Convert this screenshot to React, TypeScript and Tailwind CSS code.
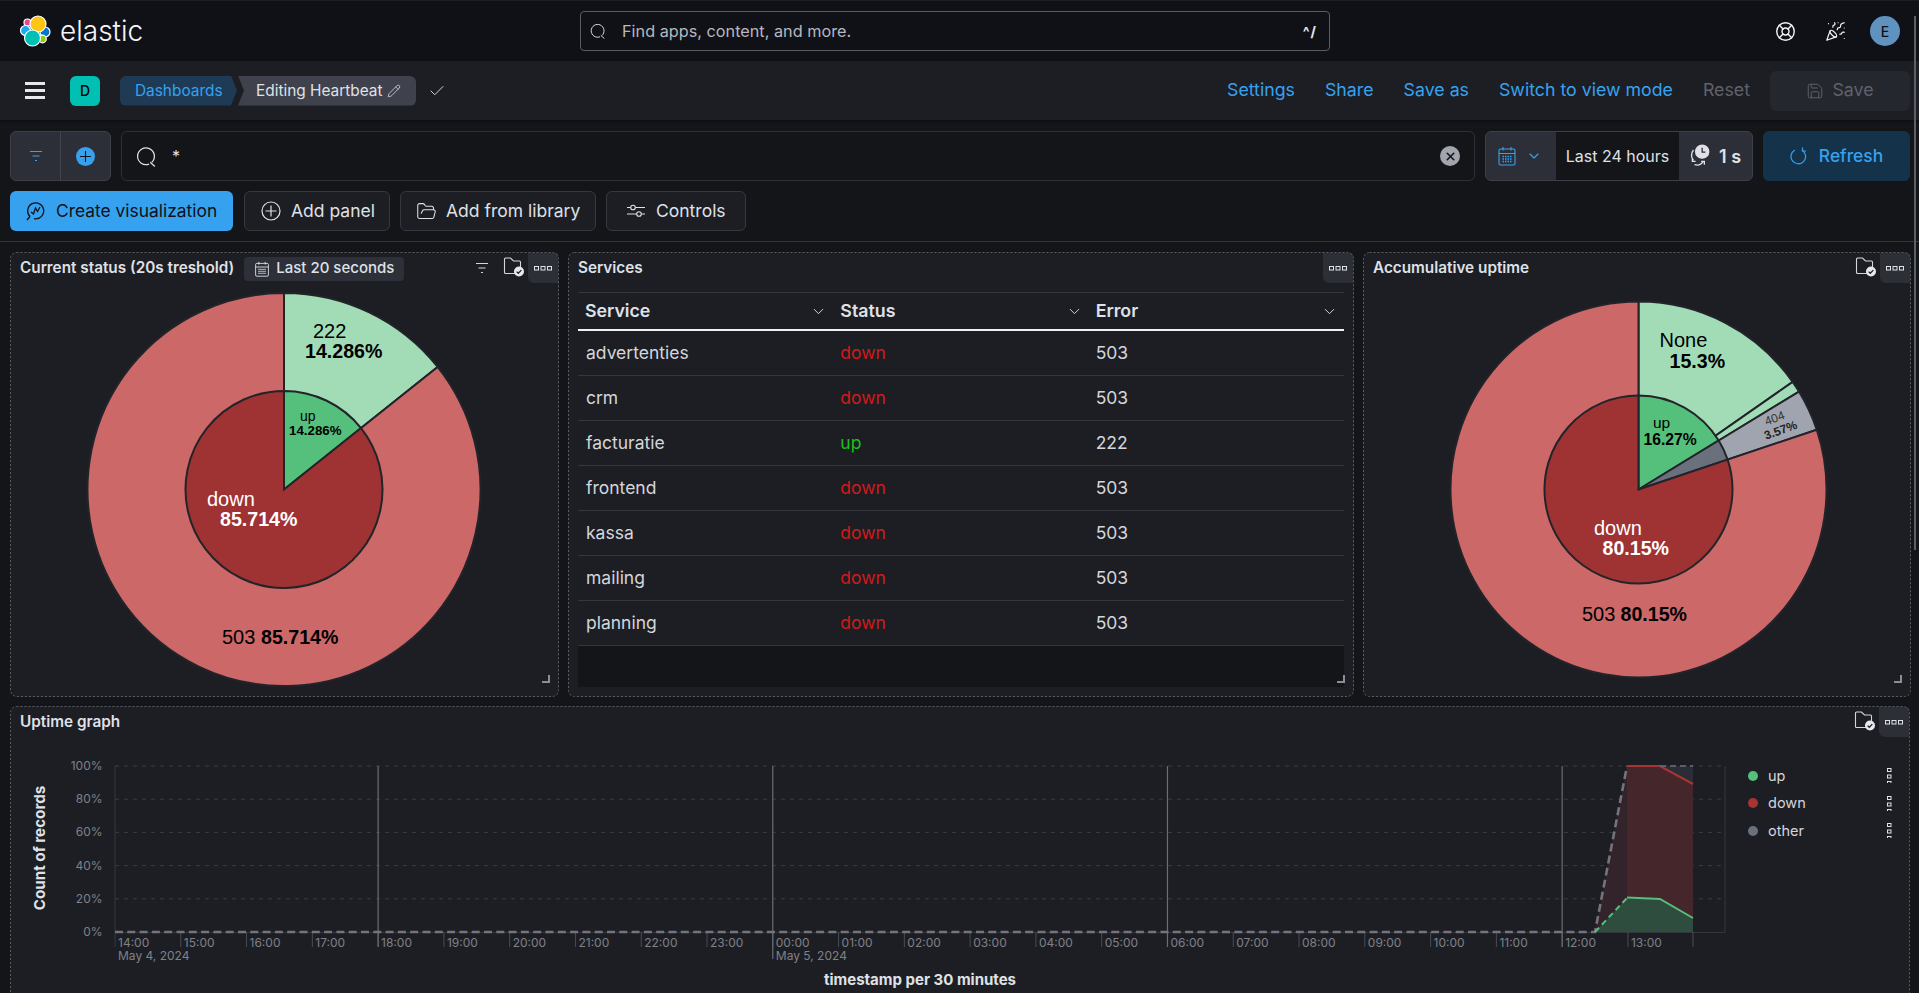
import React from "react";
import { LifeBuoy, PartyPopper, Save, Pencil, Check, FolderOpen, ChevronDown, X as CloseIcon } from "lucide-react";

const pt = (cx: number, cy: number, r: number, pct: number) => {
  const a = (pct / 100) * 2 * Math.PI;
  return [cx + r * Math.sin(a), cy - r * Math.cos(a)];
};
const slice = (cx: number, cy: number, r: number, from: number, to: number) => {
  const [x1, y1] = pt(cx, cy, r, from);
  const [x2, y2] = pt(cx, cy, r, to);
  const large = to - from > 50 ? 1 : 0;
  return `M${cx} ${cy}L${x1} ${y1}A${r} ${r} 0 ${large} 1 ${x2} ${y2}Z`;
};

const Dots = ({ vertical = false }: { vertical?: boolean }) => (
  <svg width={vertical ? 5 : 19} height={vertical ? 15 : 5} viewBox={vertical ? "0 0 5 15" : "0 0 19 5"} fill="none" stroke="#e0e2e8" strokeWidth="1">
    {[0, 6.5, 13].map((p) =>
      vertical ? <rect key={p} x="0.5" y={p + 0.5} width="3.5" height="3" /> : <rect key={p} x={p + 0.5} y="0.5" width="4" height="3.5" />
    )}
  </svg>
);

const FolderCheck = () => (
  <svg width="22" height="20" viewBox="0 0 22 20" fill="none">
    <path d="M14 16.5H2.5a1 1 0 0 1-1-1V2a1 1 0 0 1 1-1h5l3 3h6a1 1 0 0 1 1 1v5" stroke="#d4d6dc" strokeWidth="1.1" />
    <circle cx="16" cy="14.5" r="5" fill="#e6e8ee" />
    <path d="M13.6 14.6l1.7 1.7 3-3.2" stroke="#1d1e24" strokeWidth="1.3" />
  </svg>
);

const Filter = ({ color = "#d4d6dc" }: { color?: string }) => (
  <svg width="14" height="12" viewBox="0 0 14 12" fill="none" stroke={color} strokeWidth="1.2">
    <path d="M1 1.5h12M3.5 6h7M6 10.5h2" />
  </svg>
);

const SearchIcon = ({ size = 16 }: { size?: number }) => (
  <svg width={size} height={size} viewBox="0 0 20 20" fill="none" stroke="#e0e2e8" strokeWidth="1.2">
    <path d="M12.5 17.2A8 8 0 1 1 15 15.6" />
    <path d="M13.5 15.5L18 19.5" />
  </svg>
);

const CalendarGrid = ({ color, size = 20 }: { color: string; size?: number }) => (
  <svg width={size} height={size} viewBox="0 0 20 20" fill="none" stroke={color} strokeWidth="1.1">
    <rect x="2" y="3" width="16" height="16" rx="1.5" />
    <path d="M2 7.5h16M6 1v3.5M14 1v3.5" />
    <path d="M5.5 10.5h9M5.5 13h9M5.5 15.5h9" strokeDasharray="1.5 1" strokeWidth="1.4" />
  </svg>
);

const Panel = ({ className, title, extra, filter, folder = true, children }: { className: string; title: string; extra?: React.ReactNode; filter?: boolean; folder?: boolean; children: React.ReactNode }) => (
  <div className={`relative flex flex-col overflow-hidden rounded-md bg-[#1d1e24] p-px ${className}`}>
    <div className="flex h-[29px] shrink-0 items-start">
      <div className="flex h-[29px] flex-1 items-center pl-[9px] pt-[2px]">
        <span className="text-[15.3px] font-semibold text-[#dfe1e7]">{title}</span>
        {extra}
      </div>
      <div className="flex h-[30px] items-center">
        {filter && <div className="mr-[14px]"><Filter /></div>}
        {folder && <div className="mr-[3px] mt-[-2px]"><FolderCheck /></div>}
        <div className="flex h-[30px] w-[30px] items-center justify-center rounded-bl-md bg-[#2d2f36]"><Dots /></div>
      </div>
    </div>
    {children}
    <svg className="pointer-events-none absolute left-0 top-0 h-full w-full" fill="none">
      <rect x="0.5" y="0.5" rx="6" className="h-[calc(100%-1px)] w-[calc(100%-1px)]" stroke="#5c5e66" strokeDasharray="2 2" />
    </svg>
  </div>
);

const Resize = () => (
  <svg className="absolute bottom-[14px] right-[9px]" width="8" height="8" viewBox="0 0 8 8" fill="none" stroke="#8a8e99" strokeWidth="2"><path d="M0 7h7V0" /></svg>
);

const PieSvg = ({ vb, children }: { vb: string; children: React.ReactNode }) => (
  <svg className="min-h-0 flex-1 font-['Liberation_Sans',Arial,sans-serif]" viewBox={vb} preserveAspectRatio="xMinYMin meet">{children}</svg>
);

const STROKE = { stroke: "#23242a", strokeWidth: 2 };

const CurrentPie = () => {
  const c = [284, 489.5] as const;
  return (
    <PieSvg vb="11 282 547 414">
      <path d={slice(c[0], c[1], 196.5, 0, 14.286)} fill="#a2dcb6" {...STROKE} />
      <path d={slice(c[0], c[1], 196.5, 14.286, 100)} fill="#cd6868" {...STROKE} />
      <path d={slice(c[0], c[1], 98.5, 0, 14.286)} fill="#54c07b" {...STROKE} />
      <path d={slice(c[0], c[1], 98.5, 14.286, 100)} fill="#9f3232" {...STROKE} />
      <g fill="#000">
        <text x="313" y="338" fontSize="20">222</text>
        <text x="305" y="358" fontSize="19.6" fontWeight="700">14.286%</text>
        <text x="300" y="421" fontSize="14">up</text>
        <text x="289" y="435" fontSize="13.3" fontWeight="700">14.286%</text>
        <text x="222" y="644" fontSize="20">503</text>
        <text x="261" y="644" fontSize="19.6" fontWeight="700">85.714%</text>
      </g>
      <g fill="#fff">
        <text x="207" y="505.5" fontSize="20">down</text>
        <text x="220" y="526" fontSize="19.6" fontWeight="700">85.714%</text>
      </g>
    </PieSvg>
  );
};

const AccPie = () => {
  const cx = 1638.5, cy = 489.5, R = 188, r = 94;
  return (
    <PieSvg vb="1364 282 546 414">
      <path d={slice(cx, cy, R, 0, 15.3)} fill="#a2dcb6" {...STROKE} />
      <path d={slice(cx, cy, R, 15.3, 16.28)} fill="#a2dcb6" {...STROKE} />
      <path d={slice(cx, cy, R, 16.28, 19.85)} fill="#a0a4ae" {...STROKE} />
      <path d={slice(cx, cy, R, 19.85, 100)} fill="#cd6868" {...STROKE} />
      <path d={slice(cx, cy, r, 0, 16.27)} fill="#54c07b" {...STROKE} />
      <path d={slice(cx, cy, r, 16.27, 19.85)} fill="#6a717d" {...STROKE} />
      <path d={slice(cx, cy, r, 19.85, 100)} fill="#9f3232" {...STROKE} />
      <g fill="#000">
        <text x="1659.5" y="347" fontSize="20">None</text>
        <text x="1669.5" y="368" fontSize="19.6" fontWeight="700">15.3%</text>
        <text x="1653" y="428" fontSize="15.5">up</text>
        <text x="1643.5" y="445" fontSize="15.7" fontWeight="700">16.27%</text>
        <text x="1582" y="620.5" fontSize="20">503</text>
        <text x="1620.5" y="620.5" fontSize="19.6" fontWeight="700">80.15%</text>
        <text transform="translate(1776 422) rotate(-20)" textAnchor="middle" fontSize="12" fill="#333">404</text>
        <text transform="translate(1782 434) rotate(-20)" textAnchor="middle" fontSize="12" fontWeight="700" fill="#222">3.57%</text>
      </g>
      <g fill="#fff">
        <text x="1594" y="534.5" fontSize="20">down</text>
        <text x="1602.5" y="555" fontSize="19.6" fontWeight="700">80.15%</text>
      </g>
    </PieSvg>
  );
};

const rows = [
  ["advertenties", "down", "503"],
  ["crm", "down", "503"],
  ["facturatie", "up", "222"],
  ["frontend", "down", "503"],
  ["kassa", "down", "503"],
  ["mailing", "down", "503"],
  ["planning", "down", "503"],
];

const Services = () => (
  <div className="mx-[9px] mt-[10px] flex flex-1 flex-col">
    <div className="grid h-[39px] grid-cols-3 border-y border-t-[#353740] border-b-[#eef0f4] border-b-2 text-[17.8px] font-semibold text-[#dfe1e7]">
      {["Service", "Status", "Error"].map((h) => (
        <div key={h} className="flex items-center justify-between pl-[7px] pr-[6px]">
          <span>{h}</span>
          <ChevronDown size={17} strokeWidth={1.3} />
        </div>
      ))}
    </div>
    {rows.map(([s, st, e]) => (
      <div key={s} className="grid h-[45px] grid-cols-3 items-center border-b border-[#34363e] text-[17.5px] text-[#d4d6dc]">
        <span className="pl-[8px]">{s}</span>
        <span className={`pl-[7px] ${st === "up" ? "text-[#19c219]" : "text-[#d11a1a]"}`}>{st}</span>
        <span className="pl-[7px]">{e}</span>
      </div>
    ))}
    <div className="mb-[9px] flex-1 bg-[#141519]" />
  </div>
);

const hours = ["14:00","15:00","16:00","17:00","18:00","19:00","20:00","21:00","22:00","23:00","00:00","01:00","02:00","03:00","04:00","05:00","06:00","07:00","08:00","09:00","10:00","11:00","12:00","13:00"];
const hx = (k: number) => 115 + 65.78 * k;

const Chart = () => (
  <svg className="h-[260px] w-[1735px] shrink-0" viewBox="11 736 1735 260">
    {[766, 799.2, 832.4, 865.6, 898.8].map((y) => (
      <path key={y} d={`M115 ${y}H1722`} stroke="#3a3c43" strokeDasharray="4 5" fill="none" />
    ))}
    <path d="M115 766V947M1725 766V932M115 932.5H1725" stroke="#34363d" fill="none" />
    {hours.map((_, i) => i > 0 && (
      <path key={i} d={`M${hx(i)} 932V947`} stroke="#4a4c53" fill="none" />
    ))}
    <path d="M1693 932V947" stroke="#4a4c53" fill="none" />
    {[4, 10, 16, 22].map((k) => (
      <path key={k} d={`M${hx(k)} 766V${k === 10 ? 959 : 947}`} stroke="#6b6d74" strokeWidth="1.2" fill="none" />
    ))}
    <path d="M1595 932L1627 766V898Z" fill="#33232a" />
    <path d="M1627 766H1660L1693 784V918L1660 899.5L1627 898Z" fill="#45272b" />
    <path d="M1660 766H1693V784Z" fill="#2a2d37" />
    <path d="M1595 932L1627 898L1660 899.5L1693 918V932Z" fill="#2f4d3f" />
    <path d="M115 932H1595L1627 766" stroke="#75747c" strokeWidth="2.6" strokeDasharray="8 4.3" fill="none" />
    <path d="M1595 932L1627 898" stroke="#54c07b" strokeWidth="2" strokeDasharray="6 4" fill="none" />
    <path d="M1627 897.5L1660 899L1693 918" stroke="#54c07b" strokeWidth="2" fill="none" />
    <path d="M1627 766H1660L1693 784" stroke="#a83434" strokeWidth="2" fill="none" />
    <path d="M1660 766H1693" stroke="#6a717d" strokeWidth="1.6" strokeDasharray="6 4" fill="none" />
    <g fill="#7f8189" fontSize="12">
      {["100%", "80%", "60%", "40%", "20%", "0%"].map((t, i) => (
        <text key={t} x="102.5" y={770 + 33.2 * i} textAnchor="end">{t}</text>
      ))}
      {hours.map((h, i) => (
        <text key={h} x={hx(i) + 3} y="947">{h}</text>
      ))}
      <text x="118" y="960">May 4, 2024</text>
      <text x={hx(10) + 3} y="960">May 5, 2024</text>
    </g>
    <text transform="translate(45 848) rotate(-90)" textAnchor="middle" fontSize="15.2" fontWeight="700" fill="#dfe1e7">Count of records</text>
    <text x="920" y="985" textAnchor="middle" fontSize="15" fontWeight="700" fill="#dfe1e7">timestamp per 30 minutes</text>
  </svg>
);

const Legend = () => (
  <div className="flex flex-1 flex-col pl-[2px] pr-[17px] pt-[26px]">
    {[["up", "bg-[#54c07b]"], ["down", "bg-[#a83434]"], ["other", "bg-[#6a717d]"]].map(([t, c]) => (
      <div key={t} className="flex h-[27.5px] items-center text-[14.5px] text-[#d4d6dc]">
        <span className={`mr-[10px] h-[10px] w-[10px] rounded-full ${c}`} />
        <span className="flex-1">{t}</span>
        <Dots vertical />
      </div>
    ))}
  </div>
);

const Logo = () => (
  <svg width="32" height="32" viewBox="19 15 32 32">
    <g stroke="#fff" strokeWidth="1.2">
      <circle cx="27.5" cy="22.5" r="3.5" fill="#e8488b" />
      <circle cx="25.5" cy="30.5" r="5" fill="#1ba9f5" />
      <circle cx="45" cy="32" r="5" fill="#0077cc" />
      <circle cx="42.5" cy="39" r="3.8" fill="#93c90e" />
      <circle cx="38" cy="24" r="8" fill="#fec514" />
      <circle cx="32.5" cy="38" r="8" fill="#00bfb3" />
    </g>
  </svg>
);

const OutlineBtn = ({ className, icon, label }: { className: string; icon: React.ReactNode; label: string }) => (
  <div className={`flex h-[40px] items-center rounded-md border border-[#363840] bg-[#1d1e24] text-[17.5px] text-[#dfe1e7] ${className}`}>
    {icon}
    <span>{label}</span>
  </div>
);

export default function App() {
  return (
    <div className="relative h-[993px] w-[1919px] overflow-hidden bg-[#141519] font-['Inter',sans-serif] text-[#dfe1e7]">
      <header className="flex h-[61px] items-center border-t border-[#1c1d22] bg-[#101116]">
        <div className="flex w-[580px] items-center pl-[19px]">
          <Logo />
          <span className="ml-[9px] text-[28px] font-light leading-none text-[#f4f5f8]">elastic</span>
        </div>
        <div className="flex h-[40px] w-[750px] items-center rounded-[4px] border border-[#5a5c64] bg-[#101116] px-[9px]">
          <SearchIcon />
          <span className="ml-[16px] flex-1 text-[16.25px] text-[#b5b8c0]">Find apps, content, and more.</span>
          <span className="pr-[3px] text-[14px] font-bold tracking-[1px] text-[#e6e8ee]">^/</span>
        </div>
        <div className="flex flex-1 items-center justify-end pr-[19px]">
          <LifeBuoy size={21} strokeWidth={1.6} className="text-[#f4f5f8]" />
          <PartyPopper size={21} strokeWidth={1.4} className="ml-[29px] text-[#f4f5f8]" />
          <div className="ml-[24px] flex h-[30px] w-[30px] items-center justify-center rounded-full bg-[#6092c0] text-[14px] font-medium text-[#101116]">E</div>
        </div>
      </header>

      <nav className="flex h-[59px] items-center bg-[#1d1e24] shadow-[0_1px_2px_#0b0c0f]">
        <div className="ml-[25px] flex w-[20px] flex-col gap-[4px]">
          <span className="h-[3px] bg-[#e6e8ee]" /><span className="h-[3px] bg-[#e6e8ee]" /><span className="h-[3px] bg-[#e6e8ee]" />
        </div>
        <div className="ml-[25px] flex h-[30px] w-[30px] items-center justify-center rounded-md bg-[#00bfb3] text-[14px] font-medium text-black">D</div>
        <div className="ml-[20px] flex h-[30px] w-[296px] items-stretch overflow-hidden rounded-md text-[15.4px]">
          <div className="flex w-[117px] items-center bg-[#1e3a55] pl-[15px] text-[#36a2ef] [clip-path:polygon(0_0,calc(100%-6px)_0,100%_50%,calc(100%-6px)_100%,0_100%)]">Dashboards</div>
          <div className="ml-[1px] flex flex-1 items-center gap-[4px] bg-[#3f424c] pl-[18px] text-[#dfe1e7] [clip-path:polygon(0_0,100%_0,100%_100%,0_100%,6px_50%)]">
            Editing Heartbeat <Pencil size={14} strokeWidth={1.3} />
          </div>
        </div>
        <Check size={18} strokeWidth={1.2} className="ml-[12px] text-[#e6e8ee]" />
        <div className="ml-auto flex items-center gap-[30px] pr-[9px] text-[17.75px]">
          <span className="text-[#36a2ef]">Settings</span>
          <span className="text-[#36a2ef]">Share</span>
          <span className="text-[#36a2ef]">Save as</span>
          <span className="text-[#36a2ef]">Switch to view mode</span>
          <span className="text-[#5f626b]">Reset</span>
          <div className="ml-[-10px] flex h-[40px] w-[140px] items-center justify-center gap-[8px] rounded-md bg-[#25272e] text-[#5f626b]">
            <Save size={18} strokeWidth={1.3} /> Save
          </div>
        </div>
      </nav>

      <div className="flex gap-[10px] pl-[10px] pr-[9px] pt-[11px]">
        <div className="flex h-[50px] w-[101px] overflow-hidden rounded-md border border-[#3e4049] bg-[#2d2f38]">
          <div className="flex w-[50px] items-center justify-center border-r border-[#43454e]"><Filter color="#36a2ef" /></div>
          <div className="flex flex-1 items-center justify-center">
            <div className="flex h-[19px] w-[19px] items-center justify-center rounded-full bg-[#36a2ef]">
              <svg width="13" height="13" viewBox="0 0 13 13" stroke="#141519" strokeWidth="1.1"><path d="M6.5 1v11M1 6.5h11" /></svg>
            </div>
          </div>
        </div>
        <div className="flex h-[50px] flex-1 items-center rounded-md border border-[#2e3037] bg-[#141519] pl-[14px] pr-[14px]">
          <SearchIcon size={21} />
          <span className="ml-[15px] flex-1 text-[16px] text-[#dfe1e7]">*</span>
          <div className="flex h-[20px] w-[20px] items-center justify-center rounded-full bg-[#a2a5ae]"><CloseIcon size={13} strokeWidth={3} className="text-[#141519]" /></div>
        </div>
        <div className="flex h-[50px] w-[268px] overflow-hidden rounded-md border border-[#3e4049] bg-[#2d2f38] text-[16px]">
          <div className="flex w-[70px] items-center gap-[6px] pl-[11px] text-[#36a2ef]">
            <CalendarGrid color="#36a2ef" />
            <ChevronDown size={16} strokeWidth={1.6} className="ml-[3px]" />
          </div>
          <div className="flex w-[123px] items-center justify-center whitespace-nowrap bg-[#141519] text-[#dfe1e7]">Last 24 hours</div>
          <div className="flex flex-1 items-center gap-[9px] pl-[11px] text-[18px] font-semibold text-[#dfe1e7]">
            <svg width="20" height="24" viewBox="0 0 18 22" fill="none" stroke="#dfe1e7" strokeWidth="1.2">
              <circle cx="11" cy="7" r="6" fill="#dfe1e7" />
              <path d="M11 3.5V7.5H14" stroke="#2d2f38" />
              <path d="M3 5.5A8 8 0 0 0 3 15M4 19a7 7 0 0 0 8-3M2 13v3h3M10 16h3v3" />
            </svg>
            1 s
          </div>
        </div>
        <div className="flex h-[50px] w-[147px] items-center justify-center gap-[12px] rounded-md bg-[#14324a] text-[17.4px] font-medium text-[#36a2ef]">
          <svg width="17" height="18" viewBox="0 0 17 18" fill="none" stroke="#36a2ef" strokeWidth="1.2"><path d="M5 3A7.3 7.3 0 1 0 12 3.2" /><path d="M12.5 0.5V4H16" /></svg>
          Refresh
        </div>
      </div>

      <div className="flex gap-[10px] border-b border-[#34363d] pb-[10px] pl-[10px] pt-[10px]">
        <div className="mr-px flex h-[40px] w-[223px] items-center gap-[10px] rounded-md bg-[#36a2ef] pl-[16px] text-[17.4px] text-[#101116]">
          <svg width="20" height="20" viewBox="0 0 20 20" fill="none" stroke="#101116" strokeWidth="1.3"><path d="M4 15.5A8 8 0 1 1 8 17.7M1 19l3-3.5" /><path d="M5 11l2.5 2 2-6 2 3.5L14 6" /></svg>
          Create visualization
        </div>
        <OutlineBtn className="w-[146px] gap-[10px] pl-[16px]" label="Add panel" icon={
          <svg width="20" height="20" viewBox="0 0 20 20" fill="none" stroke="#dfe1e7" strokeWidth="1.2"><circle cx="10" cy="10" r="9" /><path d="M10 4.5v11M4.5 10h11" /></svg>
        } />
        <OutlineBtn className="w-[196px] gap-[9px] pl-[15px]" label="Add from library" icon={<FolderOpen size={21} strokeWidth={1.2} />} />
        <OutlineBtn className="w-[140px] gap-[10px] pl-[20px]" label="Controls" icon={
          <svg width="19" height="16" viewBox="0 0 19 16" fill="none" stroke="#dfe1e7" strokeWidth="1.1"><circle cx="6" cy="4.5" r="2.3" /><circle cx="12" cy="11" r="2.3" /><path d="M0 4.5h3.5M8.5 4.5H18M0 11h9.5M14.5 11H18" /></svg>
        } />
      </div>

      <div className="flex flex-col gap-[9px] pl-[10px] pt-[10px]">
        <div className="flex gap-[9px]">
          <Panel className="h-[445px] w-[549px]" title="Current status (20s treshold)" filter extra={
            <div className="ml-[10px] flex h-[24px] items-center gap-[6px] rounded-[4px] bg-[#2e3039] px-[10px] text-[15px] font-medium text-[#dfe1e7]">
              <CalendarGrid color="#dfe1e7" size={16} /> Last 20 seconds
            </div>
          }>
            <CurrentPie />
            <Resize />
          </Panel>
          <Panel className="h-[445px] w-[786px]" title="Services" folder={false}>
            <Services />
            <Resize />
          </Panel>
          <Panel className="h-[445px] w-[548px]" title="Accumulative uptime">
            <AccPie />
            <Resize />
          </Panel>
        </div>
        <Panel className="h-[320px] w-[1900px]" title="Uptime graph">
          <div className="flex">
            <Chart />
            <Legend />
          </div>
        </Panel>
      </div>

      <div className="absolute right-[3px] top-[16px] h-[534px] w-[2px] bg-[#5c5f68]" />
    </div>
  );
}
